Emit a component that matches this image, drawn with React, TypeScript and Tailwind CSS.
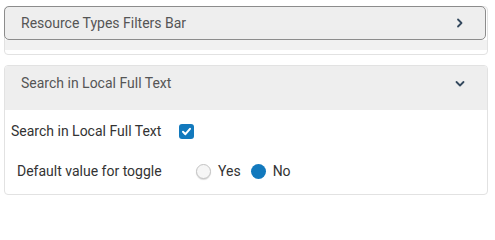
import React, { useState } from 'react';

const ChevronRight = () => (
  <svg width="8" height="10" viewBox="0 0 8 10" className="text-[#34495e]">
    <path d="M2 1.5 L5.5 5 L2 8.5" fill="none" stroke="currentColor" strokeWidth="1.8" strokeLinecap="round" strokeLinejoin="round" />
  </svg>
);

const ChevronDown = () => (
  <svg width="10" height="8" viewBox="0 0 10 8" className="text-[#34495e]">
    <path d="M1.5 2 L5 5.5 L8.5 2" fill="none" stroke="currentColor" strokeWidth="1.8" strokeLinecap="round" strokeLinejoin="round" />
  </svg>
);

const App: React.FC = () => {
  const [enabled, setEnabled] = useState(true);
  const [toggleDefault, setToggleDefault] = useState<'yes' | 'no'>('no');

  return (
    <div className="w-[495px] h-[210px] bg-white font-['Roboto',_'Liberation_Sans',_sans-serif] text-[14px] pt-[6px] px-[4px]">
      {/* Resource Types Filters Bar */}
      <div className="w-[484px] border border-[#e2e2e2] rounded-[4px]">
        <div className="-mt-px -ml-px mr-[1px] h-[34px] flex items-center justify-between pl-[16px] pr-[21px] bg-[#eeeeee] border border-[#8c8c8c] rounded-[5px] text-[#555555]">
          <span>Resource Types Filters Bar</span>
          <ChevronRight />
        </div>
        <div className="h-[10px] bg-[#f1f1f1]" />
        <div className="h-[4px]" />
      </div>

      {/* Search in Local Full Text */}
      <div className="mt-[10px] w-[484px] border border-[#e2e2e2] rounded-[4px] overflow-hidden">
        <div className="h-[44px] flex items-start justify-between pt-[7px] pl-[16px] pr-[22px] bg-[#eeeeee] text-[#555555]">
          <span className="leading-[20px]">Search in Local Full Text</span>
          <span className="mt-[7px]"><ChevronDown /></span>
        </div>
        <div className="pt-[11px] pb-[13px] text-[#333333]">
          <label className="flex items-center h-[20px] pl-[6px]">
            <span className="w-[168px]">Search in Local Full Text</span>
            <button
              type="button"
              onClick={() => setEnabled(!enabled)}
              className={`w-[15px] h-[15px] rounded-[3px] flex items-center justify-center ${enabled ? 'bg-[#1279bd]' : 'border border-[#999]'}`}
            >
              {enabled && (
                <svg width="11" height="11" viewBox="0 0 11 11">
                  <path d="M2 5.8 L4.4 8.2 L9 2.8" fill="none" stroke="white" strokeWidth="2" strokeLinecap="round" strokeLinejoin="round" />
                </svg>
              )}
            </button>
          </label>
          <div className="flex items-center h-[20px] mt-[20px] pl-[12px]">
            <span className="w-[179px]">Default value for toggle</span>
            <button type="button" onClick={() => setToggleDefault('yes')} className="flex items-center">
              <span className={`w-[15px] h-[15px] rounded-full ${toggleDefault === 'yes' ? 'bg-[#1279bd]' : 'border border-[#c4c4c4] bg-[#f6f6f6] shadow-[0_1px_1px_rgba(0,0,0,0.15)]'}`} />
              <span className="ml-[7px]">Yes</span>
            </button>
            <button type="button" onClick={() => setToggleDefault('no')} className="flex items-center ml-[10px]">
              <span className={`w-[15px] h-[15px] rounded-full ${toggleDefault === 'no' ? 'bg-[#1279bd]' : 'border border-[#c4c4c4] bg-[#f6f6f6] shadow-[0_1px_1px_rgba(0,0,0,0.15)]'}`} />
              <span className="ml-[7px]">No</span>
            </button>
          </div>
        </div>
      </div>
    </div>
  );
};

export default App;
